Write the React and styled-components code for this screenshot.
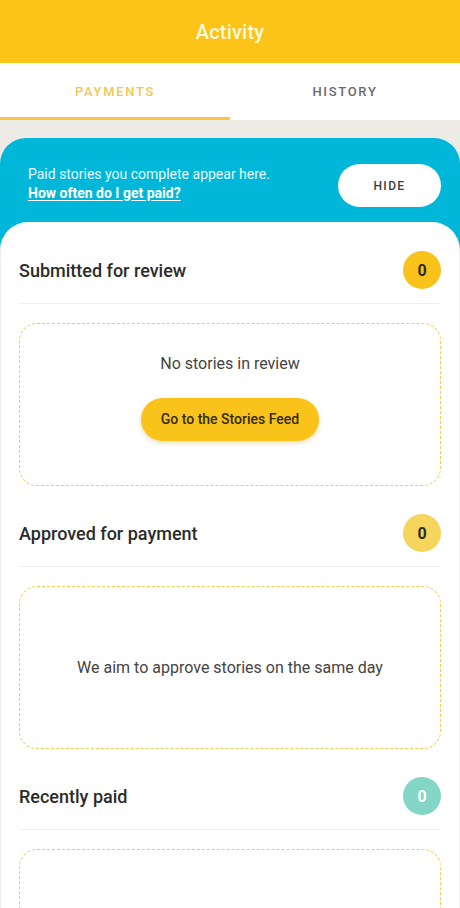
import React, { useState } from 'react';
import styled, { createGlobalStyle } from 'styled-components';

const GlobalStyle = createGlobalStyle`
  * { box-sizing: border-box; }
  body {
    margin: 0;
    font-family: Roboto, "Noto Sans", sans-serif;
    background: #ffffff;
  }
`;

const Page = styled.div`
  width: 460px;
  height: 908px;
  overflow: hidden;
  display: flex;
  flex-direction: column;
  background: #ecebe5;
`;

const Header = styled.header`
  height: 63px;
  background: #fbc417;
  display: flex;
  align-items: center;
  justify-content: center;
  flex-shrink: 0;
`;

const HeaderTitle = styled.h1`
  margin: 0;
  color: #fff8e0;
  font-size: 20px;
  font-weight: 500;
  letter-spacing: 0.2px;
`;

const Tabs = styled.nav`
  height: 57px;
  display: flex;
  background: #ffffff;
  flex-shrink: 0;
`;

const Tab = styled.button`
  flex: 1;
  border: none;
  background: none;
  padding: 0;
  font-family: inherit;
  font-size: 13px;
  font-weight: 500;
  letter-spacing: 1.7px;
  color: ${p => (p.$active ? '#f2c84b' : '#6a6a6a')};
  border-bottom: 3px solid ${p => (p.$active ? '#f6c843' : 'transparent')};
  padding-top: 3px;
  cursor: pointer;
`;

const Gap = styled.div`
  height: 18px;
  flex-shrink: 0;
`;

const Banner = styled.section`
  flex: 1;
  background: #01b7d9;
  border-radius: 26px 26px 0 0;
  display: flex;
  flex-direction: column;
`;

const BannerRow = styled.div`
  display: flex;
  align-items: center;
  justify-content: space-between;
  padding: 26px 19px 15px 28px;
`;

const BannerText = styled.div`
  font-size: 14px;
  line-height: 19px;
  color: #e6f8fc;
  margin-top: -4px;
`;

const BannerLink = styled.a`
  display: block;
  color: #ffffff;
  font-weight: 700;
  text-decoration: underline;
  text-underline-offset: 2px;
`;

const HideButton = styled.button`
  width: 103px;
  height: 43px;
  border: none;
  border-radius: 22px;
  background: #ffffff;
  font-family: inherit;
  font-size: 12px;
  font-weight: 500;
  letter-spacing: 1.4px;
  color: #3d3d3d;
  cursor: pointer;
`;

const Card = styled.div`
  flex: 1;
  background: #ffffff;
  border-radius: 28px 28px 0 0;
  border-left: 1px solid #eeeeee;
  border-right: 1px solid #eeeeee;
  padding: 1px 18px 0;
`;

const Section = styled.div`
  padding-top: 28px;
`;

const SectionHeader = styled.div`
  height: 38px;
  display: flex;
  align-items: center;
  justify-content: space-between;
  margin-bottom: 14px;
`;

const SectionTitle = styled.h2`
  margin: 0;
  font-size: 18px;
  font-weight: 500;
  color: #2b2b2b;
`;

const Badge = styled.span`
  width: 38px;
  height: 38px;
  border-radius: 50%;
  background: ${p => p.$bg};
  color: ${p => p.$fg};
  display: flex;
  align-items: center;
  justify-content: center;
  font-size: 16px;
  font-weight: 700;
`;

const Divider = styled.hr`
  margin: 0;
  border: none;
  height: 1px;
  background: #efefef;
`;

const EmptyBox = styled.div`
  margin-top: 19px;
  height: 163px;
  border: 1.5px dashed #f3cd4c;
  border-radius: 18px;
  display: flex;
  flex-direction: column;
  align-items: center;
  justify-content: center;
  gap: 25px;
  padding-bottom: ${p => (p.$withAction ? '15px' : '0')};
`;

const EmptyText = styled.p`
  margin: 0;
  font-size: 16px;
  color: #444444;
`;

const FeedButton = styled.button`
  height: 43px;
  padding: 0 20px;
  border: none;
  border-radius: 22px;
  background: #f9c31b;
  color: #352c05;
  font-family: inherit;
  font-size: 14px;
  font-weight: 500;
  box-shadow: 0 2px 5px rgba(180, 140, 0, 0.3);
  cursor: pointer;
`;

const sections = [
  {
    title: 'Submitted for review',
    badge: { bg: '#f9c31b', fg: '#2b2b2b' },
    text: 'No stories in review',
    action: 'Go to the Stories Feed',
  },
  {
    title: 'Approved for payment',
    badge: { bg: '#f5d55c', fg: '#2b2b2b' },
    text: 'We aim to approve stories on the same day',
  },
  {
    title: 'Recently paid',
    badge: { bg: '#83d6c6', fg: '#ffffff' },
    text: '',
  },
];

const App = () => {
  const [tab, setTab] = useState('payments');

  return (
    <Page>
      <GlobalStyle />
      <Header>
        <HeaderTitle>Activity</HeaderTitle>
      </Header>
      <Tabs>
        <Tab $active={tab === 'payments'} onClick={() => setTab('payments')}>PAYMENTS</Tab>
        <Tab $active={tab === 'history'} onClick={() => setTab('history')}>HISTORY</Tab>
      </Tabs>
      <Gap />
      <Banner>
        <BannerRow>
          <BannerText>
            Paid stories you complete appear here.
            <BannerLink href="#">How often do I get paid?</BannerLink>
          </BannerText>
          <HideButton>HIDE</HideButton>
        </BannerRow>
        <Card>
          {sections.map(s => (
            <Section key={s.title}>
              <SectionHeader>
                <SectionTitle>{s.title}</SectionTitle>
                <Badge $bg={s.badge.bg} $fg={s.badge.fg}>0</Badge>
              </SectionHeader>
              <Divider />
              <EmptyBox $withAction={!!s.action}>
                {s.text && <EmptyText>{s.text}</EmptyText>}
                {s.action && <FeedButton>{s.action}</FeedButton>}
              </EmptyBox>
            </Section>
          ))}
        </Card>
      </Banner>
    </Page>
  );
};

export default App;
